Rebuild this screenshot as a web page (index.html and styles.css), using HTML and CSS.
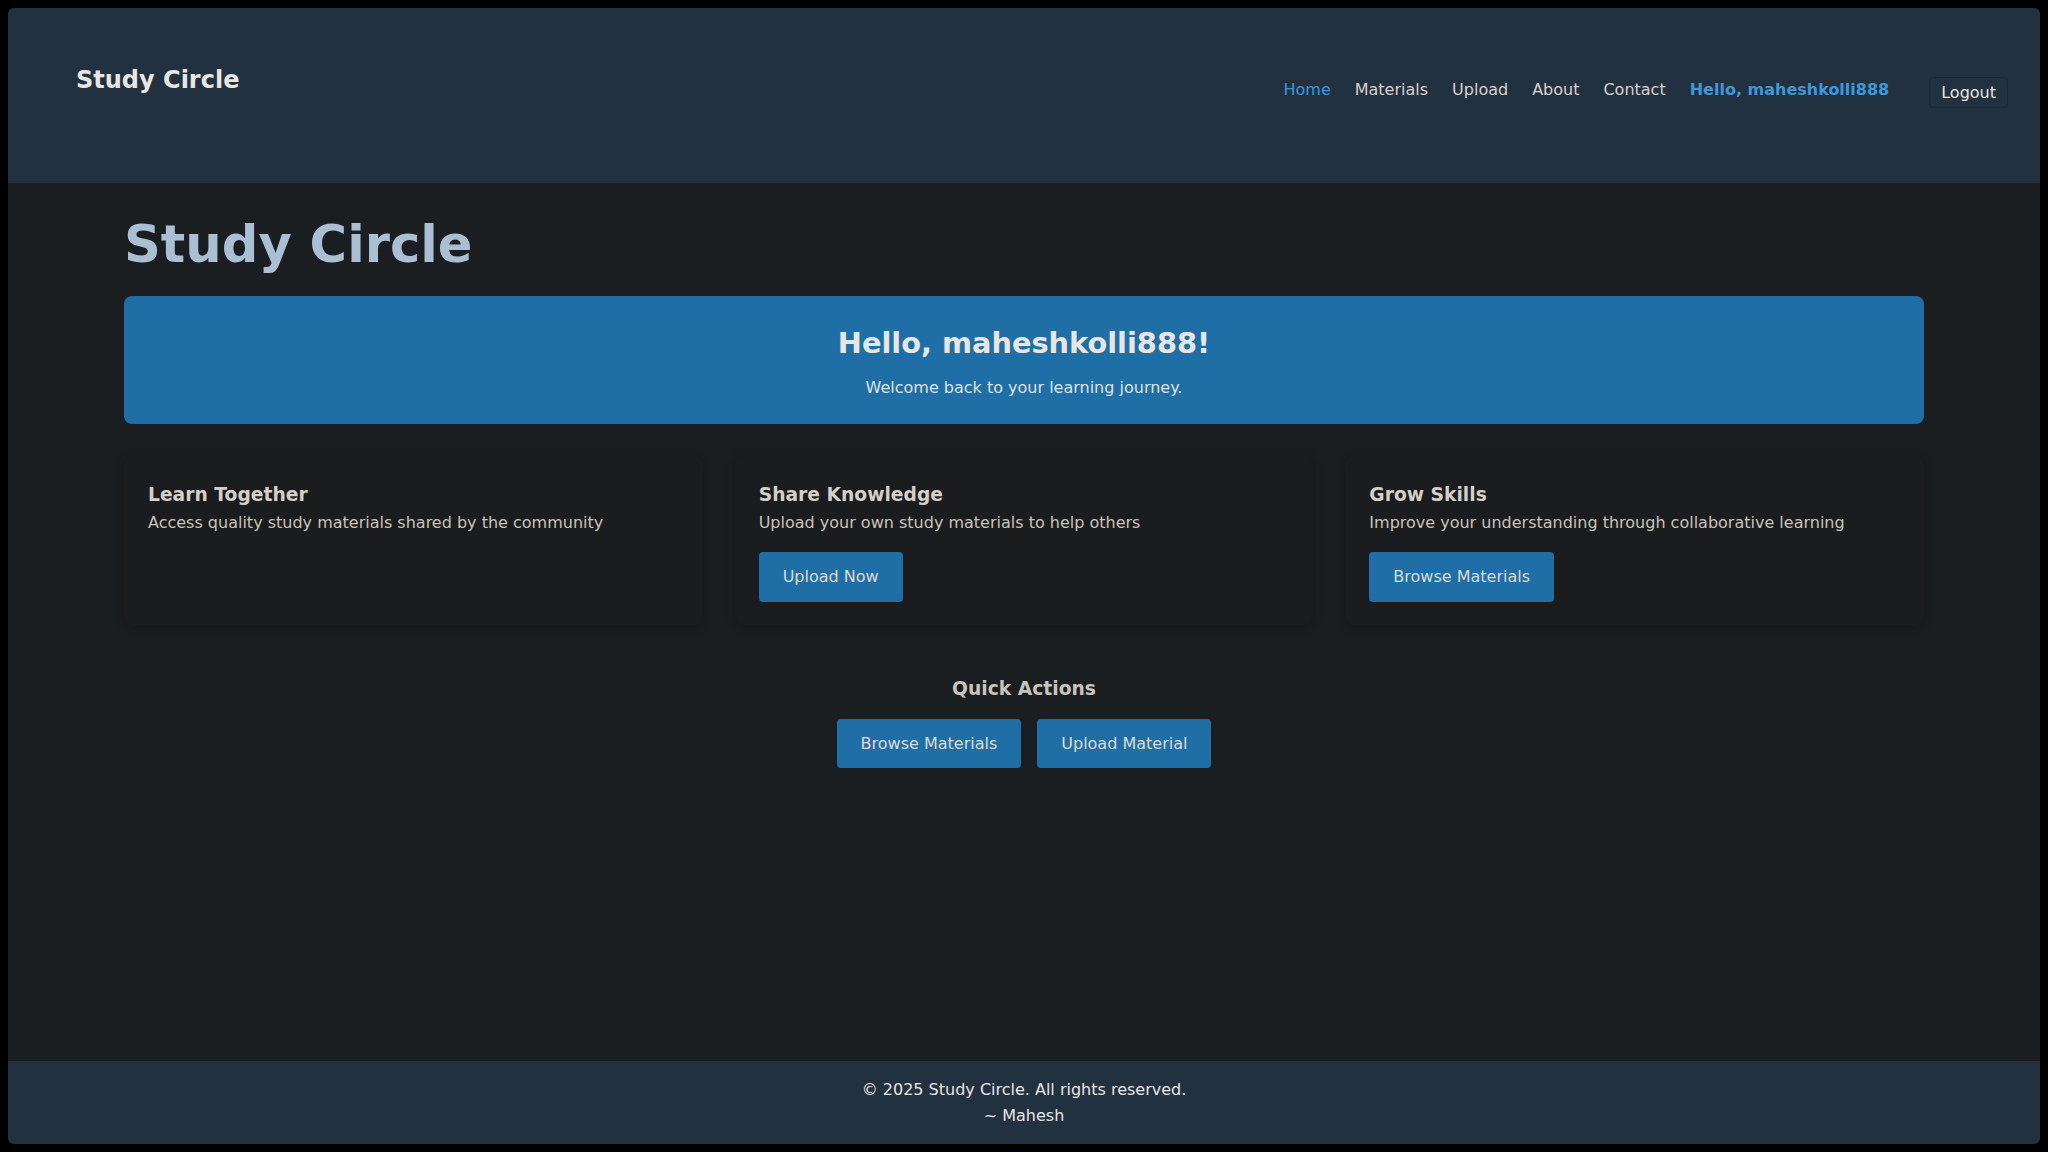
FILE: index.html
```html
<!DOCTYPE html>
<html lang="en">
<head>
<meta charset="utf-8">
<title>Study Circle</title>
<link rel="stylesheet" href="styles.css">
</head>
<body>
<div class="page">
  <header class="site-header">
    <div class="logo">Study Circle</div>
    <nav class="nav">
      <a class="nav-link active" href="#">Home</a>
      <a class="nav-link" href="#">Materials</a>
      <a class="nav-link" href="#">Upload</a>
      <a class="nav-link" href="#">About</a>
      <a class="nav-link" href="#">Contact</a>
      <span class="nav-user">Hello, maheshkolli888</span>
      <button class="logout">Logout</button>
    </nav>
  </header>

  <main class="main">
    <div class="container">
      <h1 class="page-title">Study Circle</h1>

      <section class="hero">
        <h2>Hello, maheshkolli888!</h2>
        <p>Welcome back to your learning journey.</p>
      </section>

      <section class="cards">
        <div class="card">
          <h3>Learn Together</h3>
          <p>Access quality study materials shared by the community</p>
        </div>
        <div class="card">
          <h3>Share Knowledge</h3>
          <p>Upload your own study materials to help others</p>
          <a class="btn" href="#">Upload Now</a>
        </div>
        <div class="card">
          <h3>Grow Skills</h3>
          <p>Improve your understanding through collaborative learning</p>
          <a class="btn" href="#">Browse Materials</a>
        </div>
      </section>

      <section class="quick">
        <h3>Quick Actions</h3>
        <div class="quick-buttons">
          <a class="btn" href="#">Browse Materials</a>
          <a class="btn" href="#">Upload Material</a>
        </div>
      </section>
    </div>
  </main>

  <footer class="site-footer">
    <p>© 2025 Study Circle. All rights reserved.</p>
    <p>~ Mahesh</p>
  </footer>
</div>
</body>
</html>
```

FILE: styles.css
```css
* {
  box-sizing: border-box;
}

html, body {
  margin: 0;
  height: 100%;
}

body {
  background: #000;
  padding: 8px;
  font-family: "DejaVu Sans", Verdana, sans-serif;
  font-size: 16px;
  line-height: 1.6;
  color: #e8e6e3;
}

.page {
  height: 100%;
  display: flex;
  flex-direction: column;
  border-radius: 6px;
  overflow: hidden;
  background: #1b1e20;
}

/* Header */
.site-header {
  height: 175px;
  flex: none;
  background: #223140;
  display: flex;
  justify-content: space-between;
  align-items: flex-start;
  padding: 53px 32px 0 68px;
}

.logo {
  font-size: 24px;
  font-weight: bold;
  color: #e8e6e3;
}

.nav {
  display: flex;
  align-items: flex-start;
  gap: 24px;
  margin-top: 16px;
}

.nav-link {
  color: #d6d2cc;
  text-decoration: none;
}

.nav-link.active {
  color: #3d98da;
}

.nav-user {
  color: #3d98da;
  font-weight: bold;
}

.logout {
  margin-left: 16px;
  margin-top: 0;
  font-family: "DejaVu Sans", Verdana, sans-serif;
  font-size: 16px;
  line-height: normal;
  padding: 5px 11px;
  color: #e8e6e3;
  background: #223140;
  border: 1px solid #1c2732;
  border-radius: 4px;
}

/* Main */
.main {
  flex: 1;
  padding-top: 21px;
}

.container {
  max-width: 1800px;
  margin: 0 auto;
}

.page-title {
  margin: 0 0 10px;
  font-size: 51.2px;
  font-weight: bold;
  color: #aabfd4;
}

.hero {
  background: #1f6fa6;
  border-radius: 8px;
  padding: 24px 24px 23px;
  text-align: center;
}

.hero h2 {
  margin: 0 0 9px;
  font-size: 28.8px;
  color: #e8e6e3;
}

.hero p {
  margin: 0;
  color: #dbe2e8;
}

.cards {
  display: grid;
  grid-template-columns: repeat(3, 1fr);
  gap: 32px;
  margin-top: 32px;
}

.card {
  background: #1a1c1e;
  border-radius: 8px;
  padding: 24px 24px 23px;
  box-shadow: 0 2px 10px rgba(0, 0, 0, 0.18);
}

.card h3 {
  margin: 0;
  font-size: 18.72px;
  color: #d3cfc9;
}

.card p {
  margin: 0 0 17px;
  color: #c8c3bc;
}

.btn {
  display: inline-block;
  background: #1f6fa6;
  color: #dcdad6;
  text-decoration: none;
  padding: 12px 24px;
  border-radius: 4px;
}

.quick {
  margin-top: 49px;
  text-align: center;
}

.quick h3 {
  margin: 0 0 15px;
  font-size: 18.72px;
  color: #c8c3bc;
}

.quick-buttons {
  display: flex;
  justify-content: center;
  gap: 16px;
}

/* Footer */
.site-footer {
  flex: none;
  background: #223140;
  padding: 16px 16px 15px;
  text-align: center;
}

.site-footer p {
  margin: 0;
  line-height: 26px;
  color: #e8e6e3;
}
```
